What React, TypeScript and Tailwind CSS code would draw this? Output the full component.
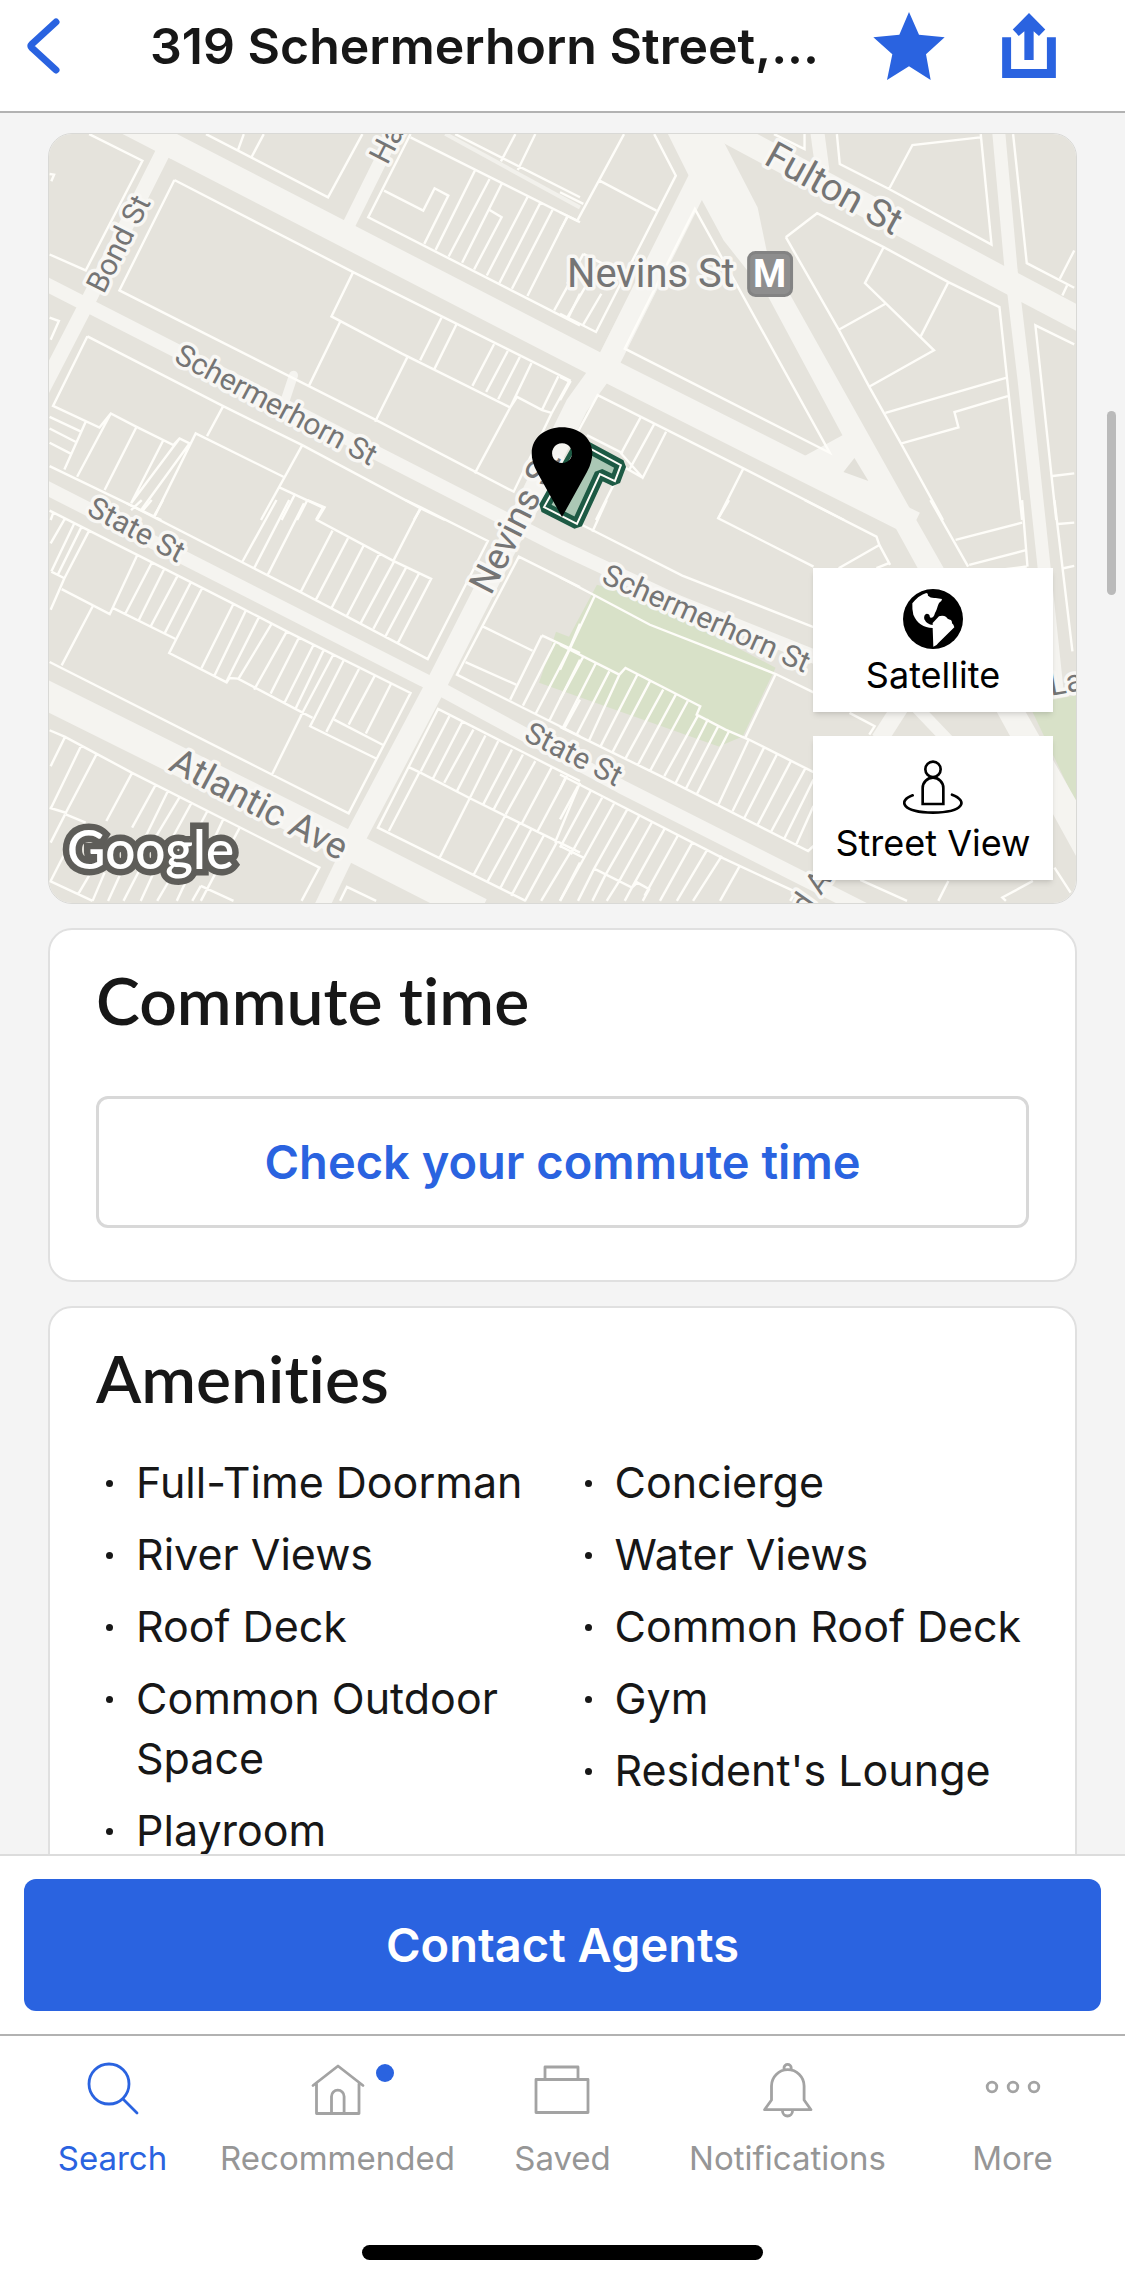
import React from 'react';

const LEFT_AMENITIES = ['Full-Time Doorman', 'River Views', 'Roof Deck', 'Common Outdoor Space', 'Playroom'];
const RIGHT_AMENITIES = ['Concierge', 'Water Views', 'Common Roof Deck', 'Gym', "Resident's Lounge"];

// Street centre lines, [path, width]
const STREETS: [string, number][] = [
  ['M100 108 L610 371 L807 470 L915 524', 25],
  ['M704 170 L608 362 L577 405 L520 520', 23],
  ['M524 512 L437 683 L355 838', 21],
  ['M357 833 L321 908', 15],
  ['M40 281 L560 547 L680 603 L830 663', 14],
  ['M40 485 L423 680 L621 787 L880 918', 14],
  ['M40 693 L356 850 L480 913', 29],
  ['M164 148 L86 303 L40 392', 15],
  ['M400 120 L349 223', 13],
  ['M700 116 L1007 280 L1085 321', 24],
  ['M999 125 L1012 270 L1025 380 L1040 520 L1058 690', 13],
  ['M817 125 L823 170', 14],
  ['M880 740 L912 690', 17],
  ['M905 695 L950 742', 12],
];

// Lot outlines, one entry per map tile. Tile units are three to the pixel.
const TILES = [
  {
    x: 40, y: 120, sx: 0.3444,
    lots: `M140 40L295 120L130 450L25 402 M25 160L38 162L30 182 M480 40L835 230L935 40 M590 40L573 88 M648 40L613 108
      M1075 40L952 290L1568 615 M1075 50L1568 305 M998 210L1112 270L1145 203L1185 225L1115 370 M1262 150L1148 388
      M1305 175L1186 408 M1340 190L1225 427 M1305 268L1340 290L1260 447 M1415 230L1297 465 M1452 248L1334 487
      M1488 268L1370 505 M1530 290L1415 527 M1568 430L1493 570 M1568 520L1534 592 M1205 40L1568 230
      M1380 40L1338 122 M1438 40L1387 148 M388 178L228 510L985 905L1375 1115L1485 880 M388 178L908 455L1538 780L1485 880
      M908 455L845 588L1050 700L1365 862L1385 830L1458 870L1485 878 M870 605L778 800 M1065 712L972 905
      M1165 592L1103 720 M1208 613L1145 745 M1318 672L1255 797 M1358 692L1295 815 M1393 710L1330 837
      M1427 728L1365 862 M1505 768L1458 868 M1365 862L1262 1060 M25 592L52 602L28 658
      M135 648L35 857L170 922L203 880L278 920L385 975L403 955L432 970 M135 648L530 858L760 975L1105 1165L1175 1200
      M530 858L483 948 M330 1190L450 940L705 1070 M760 975L640 1200 M695 1103L820 1163L800 1200 M740 1120L700 1200
      M775 1140L745 1200 M403 955L262 1150 M432 970L293 1168 M355 962L262 1150 M278 920L185 1110 M130 905L68 1048
      M203 880L105 1070 M25 890L118 935 M25 925L100 965 M25 968L85 1000 M25 1038L350 1200 M1105 1165L1085 1200`,
  },
  {
    x: 560, y: 120, sx: 0.3603,
    lots: `M178 40L48 300L0 275 M0 215L65 250 M20 290L0 330 M110 180L268 270 M262 40L322 165L100 635L0 580
      M375 265L180 685L750 998Z M65 400L20 490 M65 400L120 430 M70 500L20 592 M115 520L65 612 M0 770L28 785L0 840
      M50 935L105 825L510 1045L790 1200 M225 890L170 1000L230 1073L295 935 M262 912L192 1050 M230 1073L160 1030
      M165 1060L100 1200 M75 945L175 1000 M510 1045L440 1195 M595 40L680 85L680 40 M770 40L778 130L915 205L1200 372L1170 40
      M915 205L980 73L1168 50 M1260 40L1298 428L1430 502 M1430 390L1390 475 M1410 495L1397 525
      M628 350L715 278L900 380L1080 485L1222 560L1285 1200 M628 350L775 628L860 800L948 970L1065 1200
      M900 380L848 488L1040 690L862 798 M905 550L775 628 M1080 485L1003 648 M905 878L1240 773
      M950 970L1108 922L1097 876L1245 828 M1430 672L1322 615L1380 1200 M1370 1068L1430 1060`,
  },
  {
    x: 40, y: 500, sx: 0.3444,
    lots: `M25 32L140 92L280 165L560 312L715 395L1075 580L895 942L25 487 M250 10L585 187L755 277L1125 478L1300 123L1105 22L1060 0
      M685 0L585 187 M722 0L620 205 M775 0L825 22L803 60L1025 183L1135 237L1038 430 M1105 22L1025 183 M765 10L658 228
      M848 92L755 277 M893 115L798 303 M938 138L845 325 M985 160L890 348 M1028 183L930 370 M1062 203L967 387
      M1100 220L1002 410 M355 0L328 50 M322 0L293 35 M293 0L262 30 M140 92L68 235L30 215 M35 40L28 60 M70 55L28 130
      M97 70L30 215 M118 80L50 222 M68 235L28 330 M60 268L200 343L280 165 M210 325L390 417 M323 187L245 342
      M358 208L285 360 M397 228L320 378 M437 245L360 400 M470 262L373 460L540 548L548 535L573 537L790 655
      M150 320L60 497 M560 312L467 505 M597 330L505 527 M635 350L540 545 M672 370L573 540 M715 395L620 570
      M752 410L668 582 M793 435L708 610 M822 452L740 628 M850 465L755 650 M880 483L783 680L975 777 M925 508L830 697
      M853 660L998 738 M970 530L895 675 M1018 553L945 702 M758 645L672 825 M25 692L70 712L162 763L265 820L810 1105L758 1205
      M70 712L28 800 M117 738L28 928 M162 763L72 940L25 925 M72 945L130 970 M265 820L190 965 M333 857L265 985
      M368 877L305 1010 M402 895L335 1010 M437 912L385 1010 M483 937L430 1040 M530 960L480 1070 M577 987L465 1205
      M28 1030L70 945 M28 1145L75 1050 M25 1145L150 1205 M145 1120L108 1185 M185 1120L150 1205 M235 1115L195 1205
      M285 1115L240 1205 M330 1115L290 1205 M375 1140L338 1205 M465 1160L560 1205 M465 1160L440 1205 M420 1150L395 1205
      M1568 262L1390 170L1210 525L1568 710 M1285 380L1430 453 M1235 487L1382 555 M1457 407L1365 600 M1457 407L1568 460
      M1495 430L1402 618 M1568 372L1537 448L1440 640 M1568 480L1478 665 M1568 600L1520 690 M1568 845L1155 628L980 985L1410 1205
      M1188 650L1105 815 M1225 668L1140 838 M1258 690L1173 850 M1293 708L1210 875 M1330 725L1248 895 M1370 750L1285 918
      M1402 765L1317 930 M1438 785L1352 945 M1485 805L1400 970 M1530 830L1445 995 M1568 850L1495 1030
      M1070 803L1105 820L1245 895L1568 1060 M1100 820L1012 995 M1248 895L1160 1075 M1350 950L1258 1128 M1393 970L1300 1145
      M1427 988L1337 1165 M1462 1010L1368 1190 M1500 1030L1408 1205 M1545 1050L1455 1205 M1568 1090L1510 1205
      M870 1205L890 1163L975 1205`,
  },
  {
    x: 560, y: 500, sx: 0.3603,
    lots: `M0 42L95 93L340 227L705 382 M130 0L90 95 M680 0L880 110L888 135L918 195 M470 0L440 55L705 200 M888 135L775 205
      M918 188L880 205 M1030 0L1135 200 M1100 120L1285 68 M1285 0L1300 200 M1138 195L1298 150 M1220 210L1298 200
      M1375 0L1425 455 M1385 72L1430 68 M1400 205L1430 198 M0 232L97 287L250 375L600 523L705 578 M97 287L0 510
      M0 435L165 525L182 505L390 620L380 645L460 690L525 720L705 818 M600 523L515 715 M0 682L280 830L690 1055L705 1040
      M65 470L0 600 M100 490L8 685 M137 515L45 708 M165 525L80 725 M215 525L112 742 M250 545L145 760 M287 570L183 775
      M322 585L217 795 M355 605L250 815 M385 645L290 830 M412 658L322 850 M440 680L350 868 M470 695L380 885
      M525 720L440 917 M567 745L480 935 M603 765L513 955 M642 785L550 975 M683 805L588 995 M705 840L625 1015
      M705 920L655 1040 M0 825L450 1075L655 1178L640 1205 M0 1040L65 1075 M15 835L0 870 M50 860L0 960 M85 875L0 1045
      M117 895L30 1065 M150 913L62 1085L0 1205 M187 930L95 1108L50 1205 M220 950L125 1130L90 1205 M255 970L165 1145L130 1205
      M290 990L200 1165L180 1205 M327 1010L235 1190 M368 1030L278 1205 M410 1050L325 1205 M450 1070L370 1205
      M500 1100L445 1205 M95 1108L200 1165L215 1150L248 1170L230 1205 M805 640L875 680L860 705 M835 1142L965 1205
      M1080 1145L1052 1205 M1315 1145L1230 1195L1240 1205 M1375 1105L1420 1180`,
  },
];

const LABELS = [
  { text: 'Bond St', x: 117, y: 243, angle: -63, size: 30 },
  { text: 'Schermerhorn St', x: 276, y: 404, angle: 28, size: 30 },
  { text: 'State St', x: 136, y: 529, angle: 28, size: 30 },
  { text: 'Atlantic Ave', x: 259, y: 804, angle: 28, size: 37 },
  { text: 'Nevins St', x: 514, y: 521, angle: -63, size: 37 },
  { text: 'Schermerhorn St', x: 707, y: 618, angle: 24, size: 30 },
  { text: 'State St', x: 574, y: 754, angle: 27, size: 30 },
  { text: 'Fulton St', x: 835, y: 187, angle: 29, size: 38 },
];

const MapCanvas: React.FC = () => (
  <svg viewBox="48 133 1029 771" preserveAspectRatio="xMidYMid slice" className="w-full h-full block font-[Roboto]" aria-label="Map of 319 Schermerhorn Street">
    <rect x="48" y="133" width="1029" height="771" fill="#e5e3dc" />

    {/* Parks */}
    <path d="M569 637 L597 585 L640 597 L776 668 L743 737 L719 747 L539 683 L556 632 Z" fill="#d8e1c8" />
    <path d="M1030 705 L1080 695 L1080 810 Z" fill="#d8e1c8" />

    {/* Streets */}
    <g fill="none" stroke="#f5f4f0" strokeLinejoin="round">
      {STREETS.map(([d, width]) => (
        <path key={d} d={d} strokeWidth={width} />
      ))}
      <path d="M445 133 L580 207" stroke="#f2f1ec" strokeWidth="4" />
      <path d="M293 375 L284 402" strokeWidth="9" strokeLinecap="round" />
    </g>
    <path d="M664 125 L688 173 L724 240 L769 297 L843 435 L805 456 L808 484 L888 513 L1080 862 L1080 806 L917 520 L791 295 L767 250 L758 207 L724 141 L770 125 Z" fill="#f5f4f0" />
    <path d="M855 458 L844 472 L869 481 Z" fill="#e2e0d9" />
    <path d="M116 125 L155 150 L170 158 L180 136 L160 125 Z" fill="#f5f4f0" />

    {/* Lots */}
    <g fill="none" stroke="#fefdf9" strokeWidth="2.4">
      {TILES.map((tile) => (
        <path
          key={`${tile.x}-${tile.y}`}
          d={tile.lots}
          transform={`translate(${tile.x} ${tile.y}) scale(${tile.sx} 0.3333)`}
          vectorEffect="non-scaling-stroke"
        />
      ))}
    </g>

    {/* Street names */}
    <g fill="#757575" stroke="#f8f7f4" strokeWidth="7" strokeLinejoin="round" paintOrder="stroke">
      {LABELS.map((label) => (
        <text
          key={`${label.text}-${label.x}`}
          transform={`translate(${label.x} ${label.y}) rotate(${label.angle})`}
          dy="0.36em"
          textAnchor="middle"
          fontSize={label.size}
        >
          {label.text}
        </text>
      ))}
      <text transform="translate(387 165) rotate(-63)" fontSize="31">Hanover Pl</text>
      <text transform="translate(1052 696) rotate(-10)" fontSize="31">Lafayette Ave</text>
      <text transform="translate(791 940) rotate(-55)" fontSize="31">3rd Ave</text>
      <text x="567" y="287" fontSize="40">Nevins St</text>
    </g>
    <rect x="749" y="252" width="43" height="43" rx="7" fill="#8e8e8e" stroke="#838383" strokeWidth="3" />
    <text x="770" y="287" textAnchor="middle" fontSize="38" fontWeight="700" fill="#fff">M</text>

    {/* Building footprint */}
    <path d="M580 443 L621 465 L615 481 L600 474 L577 524 L544 507 Z" fill="#abc8b5" stroke="#1d5a44" strokeWidth="11" strokeLinejoin="bevel" />
    <path d="M580 443 L621 465 L615 481 L600 474 L577 524 L544 507 Z" fill="none" stroke="#fdfcf7" strokeWidth="2" />

    {/* Pin */}
    <path fillRule="evenodd" d="M562 517 L537 472 C522 444 541 427 562 427 C583 427 602 444 587 472 Z M562 443 a10 10 0 1 0 0.1 0 Z" />

    <text
      x="66"
      y="870"
      fontSize="53"
      fontWeight="600"
      fill="#fff"
      stroke="#5e5d59"
      strokeWidth="13"
      paintOrder="stroke"
      className="font-[Lato]"
    >
      Google
    </text>
  </svg>
);

const MapButton: React.FC<{ label: string; children: React.ReactNode }> = ({ label, children }) => (
  <button className="w-[240px] h-36 bg-white shadow-md flex flex-col items-center pt-[21px] gap-1 text-[36px] leading-[44px] text-black">
    {children}
    {label}
  </button>
);

const AmenityList: React.FC<{ items: string[] }> = ({ items }) => (
  <ul className="flex flex-col gap-3 text-[43px] leading-[60px]">
    {items.map((item) => (
      <li key={item} className="flex">
        <span className="w-10 shrink-0 pl-[10px] pt-7">
          <span className="block w-[7px] h-[7px] rounded-full bg-[#171717]" />
        </span>
        <span>{item}</span>
      </li>
    ))}
  </ul>
);

const Tab: React.FC<{ label: string; active?: boolean; children: React.ReactNode }> = ({ label, active, children }) => (
  <a href="#" className={`min-w-0 flex flex-col items-center gap-5 ${active ? 'text-[#2a63e0]' : 'text-[#969696]'}`}>
    <svg
      viewBox="0 0 56 56"
      className={`w-14 h-14 overflow-visible ${active ? 'stroke-[#2a63e0]' : 'stroke-[#a3a3a3]'}`}
      fill="none"
      strokeWidth="2.8"
      strokeLinecap="round"
      strokeLinejoin="round"
      aria-hidden="true"
    >
      {children}
    </svg>
    <span className="text-[33px] leading-10">{label}</span>
  </a>
);

const cardClass = 'shrink-0 bg-white border-2 border-[#e0e0e0] rounded-3xl px-[46px] pt-[34px] pb-[52px]';
const headingClass = 'font-[Lato] font-semibold text-[66px] leading-[72px] [font-variant-ligatures:none]';

const App: React.FC = () => {
  return (
    <div className="h-screen flex flex-col bg-[#f4f4f4] font-[Inter,sans-serif] text-[#171717]">
      {/* Header */}
      <header className="h-[113px] shrink-0 bg-white border-b-2 border-[#b2b2b2] flex items-center pl-[27px] pr-[69px] pb-5">
        <button aria-label="Back">
          <svg viewBox="0 0 33 56" className="w-[33px] h-14" fill="none" stroke="#2a63e0" strokeWidth="7" strokeLinecap="round" strokeLinejoin="round">
            <path d="M29 4 L5 26 Q3 28 5 30 L29 52" />
          </svg>
        </button>
        <h1 className="flex-1 pl-[90px] text-[50px] leading-[60px] font-semibold whitespace-nowrap">319 Schermerhorn Street,...</h1>
        <div className="flex items-center gap-[57px]">
          <button aria-label="Save">
            <svg viewBox="40 36 214 204" className="w-[72px] h-[68px]" fill="#2a63e0">
              <path d="M147 36 L177 104 L254 112 L198 163 L212 240 L147 199 L81 240 L97 163 L40 112 L118 104 Z" />
            </svg>
          </button>
          <button aria-label="Share">
            <svg viewBox="426 38 162 196" className="w-[54px] h-[65px]" fill="#2a63e0">
              <path d="M426 111 H453 V207 H561 V111 H588 V234 H426 Z" />
              <path d="M507 38 L556 88 L537 107 L521 93 V180 H493 V93 L476 107 L458 88 Z" />
            </svg>
          </button>
        </div>
      </header>

      {/* Listing details */}
      <main className="relative flex-1 min-h-0 overflow-hidden px-12 pt-5 flex flex-col gap-6">
        <section className="relative shrink-0 aspect-[1029/771] rounded-3xl overflow-hidden border border-[#d9d9d6]">
          <MapCanvas />
          <div className="absolute right-[23px] bottom-[23px] flex flex-col gap-6">
            <MapButton label="Satellite">
              <svg viewBox="0 0 180 180" className="w-[60px] h-[60px]" aria-hidden="true">
                <circle cx="90" cy="90" r="90" />
                <path
                  d="M28 43 Q48 18 70 12 Q76 13 75 20 Q84 29 98 27 L117 30 L115 36 C103 42 105 58 96 72 C92 88 82 90 80 82 Q80 74 71 74 Q61 78 64 91 Q72 107 89 108 L89 102 L108 82 Q120 78 130 84 Q132 90 144 93 Q148 98 147 103 Q152 106 154 115 L106 162 Q101 171 91 173 L89 117 C62 116 42 103 31 77 Q27 60 28 43 Z"
                  fill="#fff"
                />
              </svg>
            </MapButton>
            <MapButton label="Street View">
              <svg viewBox="0 -9 180 180" className="w-[60px] h-[60px]" fill="none" stroke="#000" strokeWidth="8" strokeLinecap="round" aria-hidden="true">
                <circle cx="90" cy="28" r="23" />
                <path d="M59 132 V84 a31 31 0 0 1 62 0 V132 Z" />
                <path d="M29 106 C-16 122 -4 157 90 158 C184 157 196 122 147 104" />
              </svg>
            </MapButton>
          </div>
        </section>

        <section className={cardClass}>
          <h2 className={headingClass}>Commute time</h2>
          <button className="mt-[60px] w-full h-[132px] border-3 border-[#d8d8d8] rounded-xl text-[47px] font-semibold text-[#2a63e0]">
            Check your commute time
          </button>
        </section>

        <section className={cardClass}>
          <h2 className={headingClass}>Amenities</h2>
          <div className="mt-[38px] grid grid-cols-2 gap-6">
            <AmenityList items={LEFT_AMENITIES} />
            <AmenityList items={RIGHT_AMENITIES} />
          </div>
        </section>

        {/* Scroll position */}
        <div className="absolute right-[9px] top-[298px] w-[9px] h-[184px] rounded-full bg-[#bababa]" />
      </main>

      {/* Contact bar */}
      <div className="shrink-0 bg-white border-t-2 border-[#dcdcdc] px-6 pt-[23px] pb-[23px]">
        <button className="w-full h-[132px] rounded-xl bg-[#2a63e0] text-white text-[47px] font-semibold">Contact Agents</button>
      </div>

      {/* Tab bar */}
      <nav className="shrink-0 bg-white border-t-2 border-[#b2b2b2] pt-[26px]">
        <div className="grid grid-cols-5">
          <Tab label="Search" active>
            <circle cx="24" cy="22" r="20" />
            <path d="M38 37 L52 51" />
          </Tab>
          <Tab label="Recommended">
            <path d="M3 23.5 L28 4 L53 23.5 M6.5 22 V51.5 H49 V22" />
            <path d="M21.5 51 V34.5 a6.3 6.3 0 0 1 12.6 0 V51" />
            <circle cx="75" cy="11" r="9" fill="#2a63e0" stroke="none" />
          </Tab>
          <Tab label="Saved">
            <path d="M1 17.5 H53 V50.5 H1 Z M10 17 V5 H43 V17" />
          </Tab>
          <Tab label="Notifications">
            <path d="M11.5 38 V24 a16.3 16.3 0 0 1 32.6 0 V38 L51 47.7 H4.5 Z M24 8 V6 a3.6 3.6 0 0 1 7.2 0 V8" />
            <path d="M22.5 49 a5 5 0 0 0 10 0" />
          </Tab>
          <Tab label="More">
            <circle cx="7" cy="25" r="4.8" />
            <circle cx="28" cy="25" r="4.8" />
            <circle cx="49" cy="25" r="4.8" />
          </Tab>
        </div>
        <div className="mx-auto mt-[67px] mb-6 w-[401px] h-[15px] rounded-full bg-black" />
      </nav>
    </div>
  );
};

export default App;
